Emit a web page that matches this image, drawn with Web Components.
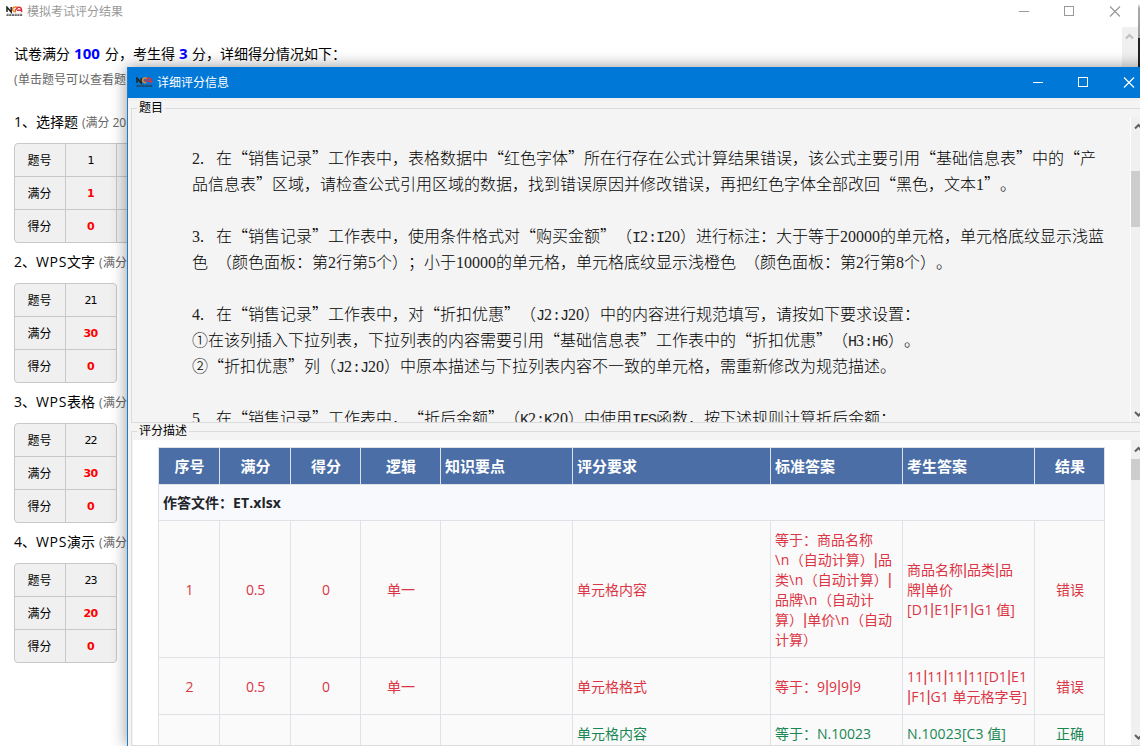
<!DOCTYPE html>
<html lang="zh-CN">
<head>
<meta charset="utf-8">
<title>模拟考试评分结果</title>
<style>
html,body{margin:0;height:100%;overflow:hidden;background:#fff}
body{font:14px/20px "Open Sans","Noto Sans CJK SC",sans-serif;color:#000}
</style>
</head>
<body>
<exam-app></exam-app>
<script>
// One line of mixed text; Latin runs are tracked so that the line is `w` pixels wide.
// Vertical bars use a narrow glyph and keep their own width.
customElements.define('fit-text', class extends HTMLElement {
  connectedCallback() {
    if (this.shadowRoot) return;
    const text = this.textContent, w = +this.getAttribute('w');
    const root = this.attachShadow({mode: 'open'});
    root.innerHTML = `<style>
      :host{display:inline-block;white-space:pre;text-spacing-trim:space-all;flex:none;text-align:left}
      .v{font-family:"Liberation Sans",sans-serif;font-size:16px;line-height:1}
    </style>`;
    const box = document.createElement('span');
    let count = 0;
    for (const part of text.match(/\||[\x20-\x7b\x7d\x7e]+|[^\x20-\x7e]+/g) || []) {
      const s = document.createElement('span');
      s.textContent = part;
      if (part === '|') s.className = 'v';
      else if (/^[\x20-\x7e]/.test(part)) { s.className = 'l'; count += part.length; }
      box.append(s);
    }
    root.append(box);
    if (w) {
      this.style.width = w + 'px';
      const gap = w - box.getBoundingClientRect().width;
      if (count) box.querySelectorAll('.l').forEach(s => s.style.letterSpacing = gap / count + 'px');
      else box.style.letterSpacing = gap / text.length + 'px';
    }
  }
});

// Question text on a 16px grid: full-width glyphs take 16px, half-width ones 8px.
customElements.define('grid-line', class extends HTMLElement {
  connectedCallback() {
    const root = this.attachShadow({mode: 'open'});
    root.innerHTML = `<style>
      :host{display:block;height:26px;font:300 16px/26px "Noto Sans CJK SC",sans-serif;white-space:pre;text-spacing-trim:space-all}
      span{line-height:1}
      .d{font-family:"Liberation Serif",serif;font-weight:400;color:#222}
      .p{font-family:"Liberation Serif",serif;font-weight:400;letter-spacing:4px}
      .m{font-family:"Liberation Mono",monospace;font-weight:400;font-size:15px;letter-spacing:-1.002px;color:#222}
    </style>`;
    for (const part of this.textContent.match(/[0-9]+|[. ]+|[\x21-\x2d\x2f\x3a-\x7e]+|[^\x20-\x7e]+/g) || []) {
      const s = document.createElement('span');
      s.textContent = part;
      if (/^[0-9]/.test(part)) s.className = 'd';
      else if (/^[. ]/.test(part)) s.className = 'p';
      else if (/^[\x20-\x7e]/.test(part)) s.className = 'm';
      root.append(s);
    }
  }
});

const logo = `<svg width="17" height="11" viewBox="0 0 17 11">
  <path d="M1 6V1.2L5.2 6V1" fill="none" stroke="#222" stroke-width="1.5"/>
  <path d="M11 1.2C8 .4 6.3 2 6.6 3.6S8.500 6 10.200 5.500" fill="none" stroke="#e58a2b" stroke-width="1.600"/>
  <path d="M9 4.500L12 1.200C15 .8 15.800 2.500 15.600 6.200M11 4.300h4" fill="none" stroke="#e0303a" stroke-width="1.500"/>
  <path d="M.5 8.300h16M.5 9.500h16" stroke="#333" stroke-width="1" stroke-dasharray="2.200 .5" opacity=".75"/></svg>`;

customElements.define('title-bar', class extends HTMLElement {
  connectedCallback() {
    this.attachShadow({mode: 'open'}).innerHTML = `<style>
      :host{display:flex;align-items:center;box-sizing:border-box;font-size:12px;line-height:20px}
      .logo{display:flex;margin-right:4px}
      .ctl{margin-left:auto;display:flex;gap:34px}
      svg{display:block;flex:none}
    </style><span class="logo">${logo}</span><slot></slot>
    <span class="ctl">
      <svg width="11" height="11" fill="none" stroke="currentColor"><path d="M0 5.500h10"/></svg>
      <svg width="11" height="11" fill="none" stroke="currentColor"><rect x=".5" y=".5" width="9" height="9"/></svg>
      <svg width="12" height="11" fill="none" stroke="currentColor" stroke-width="1.200"><path d="M1 .5l10 10M11 .5l-10 10"/></svg>
    </span>`;
  }
});

customElements.define('scroll-bar', class extends HTMLElement {
  connectedCallback() {
    const chevron = d => `<svg width="9" height="7"><path d="${d}" fill="none" stroke="currentColor" stroke-width="2"/></svg>`;
    this.attachShadow({mode: 'open'}).innerHTML = `<style>
      :host{display:flex;flex-direction:column;align-items:center;background:#f0f0f0;width:17px;flex:none;color:#606060;box-sizing:border-box;padding:6px 0 4px}
      svg{display:block;flex:none;margin-left:-2px}
      .t{width:17px;background:#cdcdcd;flex:none;margin-top:var(--t,0);height:var(--h,0)}
      .sp{flex:1}
    </style>${chevron('M1 5.500L4.500 2L8 5.500')}<div class="t"></div><div class="sp"></div>${this.hasAttribute('down') ? chevron('M1 1L4.500 4.500L8 1') : ''}`;
  }
});

customElements.define('score-section', class extends HTMLElement {
  connectedCallback() {
    const g = n => this.getAttribute(n), extra = this.hasAttribute('wide');
    const row = (l, v, c = '') => `<div class="c k">${l}</div><div class="c n ${c}"><fit-text w="${v.length * (c ? 7 : 6)}">${v}</fit-text></div>${extra ? '<div class="c"></div>' : ''}`;
    this.attachShadow({mode: 'open'}).innerHTML = `<style>
      :host{display:block;height:140px}
      .h{display:flex;height:31px;line-height:20px;align-items:flex-start;white-space:nowrap}
      .s{font-size:12px;line-height:22px;color:#666;margin-left:4px}
      .g{display:grid;grid-template-columns:50px 50px ${extra ? '50px' : ''};grid-auto-rows:32px;gap:1px;background:#c8c8c8;border:1px solid #c8c8c8;border-radius:4px;overflow:hidden;width:max-content}
      .c{background:#f0f0f0;display:flex;align-items:center;justify-content:center;font-size:12px;padding-top:2px;box-sizing:border-box}
      .k{padding-right:1px}
      .n{font:11px/16px "DejaVu Sans",sans-serif;padding-right:1px}
      .r{color:#f00;font-weight:700;font-size:11px}
    </style>
    <div class="h"><fit-text w="22">${g('no')}、</fit-text><fit-text w="${g('w')}">${g('name')}</fit-text><fit-text class="s" w="${g('sw')}">${g('note')}</fit-text></div>
    <div class="g">${row('题号', g('q'))}${row('满分', g('full'), 'r')}${row('得分', '0', 'r')}</div>`;
  }
});

customElements.define('result-window', class extends HTMLElement {
  connectedCallback() {
    this.attachShadow({mode: 'open'}).innerHTML = `<style>
      :host{display:grid;grid-template-columns:1fr 2px;width:1140px;height:746px;background:#fff}
      title-bar{height:27px;padding:0 17px 4px 6px;color:#999}
      .main{display:flex;flex-direction:column}
      .body{flex:1;display:flex}
      .content{flex:1;padding:17px 0 0 14px;min-width:0}
      .sum{display:flex;height:25px;align-items:flex-start}
      b{color:#00f;font-weight:700;font-size:15px;margin-top:-1px}
      .hint{font-size:12px;line-height:22px;color:#666;height:43px}
      scroll-bar{width:16px;color:#bfbfbf}
      .edge{background:linear-gradient(#fff 0 4px,#aaa 8px,#999 38px,#222 38px)}
    </style>
    <div class="main"><title-bar><fit-text w="96">模拟考试评分结果</fit-text></title-bar>
    <div class="body"><div class="content">
      <div class="sum"><fit-text w="56">试卷满分</fit-text><b style="margin-left:4px;margin-right:5px"><fit-text w="26">100</fit-text></b><fit-text w="70">分，考生得</fit-text><b style="margin-left:4px;margin-right:4px"><fit-text w="9">3</fit-text></b><fit-text w="154">分，详细得分情况如下：</fit-text></div>
      <div class="hint"><fit-text w="112">(单击题号可以查看题</fit-text></div>
      <score-section wide no="1" name="选择题" w="42" note="(满分 20" sw="44" q="1" full="1"></score-section>
      <score-section no="2" name="WPS文字" w="59" note="(满分" sw="28" q="21" full="30"></score-section>
      <score-section no="3" name="WPS表格" w="59" note="(满分" sw="28" q="22" full="30"></score-section>
      <score-section no="4" name="WPS演示" w="59" note="(满分" sw="28" q="23" full="20"></score-section>
    </div><scroll-bar></scroll-bar></div></div><div class="edge"></div>`;
  }
});

customElements.define('group-box', class extends HTMLElement {
  connectedCallback() {
    this.attachShadow({mode: 'open'}).innerHTML = `<style>
      :host{display:grid;grid-template-rows:9px 1fr;width:1025px;box-sizing:border-box}
      .top{display:flex;align-items:center;height:18px;font-size:12px;line-height:18px;white-space:nowrap;z-index:1}
      .top i{width:6px;height:1px;background:#dcdcdc}.top u{flex:1;height:1px;background:#dcdcdc}
      .top span{padding:0 2px}
      .b{border-left:1px solid #dcdcdc;border-bottom:1px solid #dcdcdc;display:flex;overflow:hidden;min-height:0;padding:9px 0 0 1px}
    </style><div class="top"><i></i><span>${this.getAttribute('label')}</span><u></u></div><div class="b"><slot></slot></div>`;
  }
});

customElements.define('score-table', class extends HTMLElement {
  connectedCallback() {
    const cell = (c, lines) => `<div class="${c}">${lines.map(([t, w]) => `<fit-text w="${w}">${t}</fit-text>`).join('')}</div>`;
    const head = [['序号',30],['满分',30],['得分',30],['逻辑',30],['知识要点',60],['评分要求',60],['标准答案',60],['考生答案',60],['结果',30]]
      .map((h, i) => cell('h' + (i < 4 || i > 7 ? ' m' : ''), [h])).join('');
    const row = (c, n, full, got, logic, req, std, ans, res) =>
      cell(c + ' m', n) + cell(c + ' m', full) + cell(c + ' m', got) + cell(c + ' m', logic) + cell(c, []) + cell(c, req) + cell(c, std) + cell(c, ans) + cell(c + ' m', res);
    this.attachShadow({mode: 'open'}).innerHTML = `<style>
      :host{display:grid;grid-template-columns:60px 70px 69px 79px 131px 197px 131px 131px 69px;grid-template-rows:36px 35px 136px 56px 38px;gap:1px;background:#dee2e6;padding:1px;width:max-content;height:max-content}
      div{background:#fafafa;display:flex;flex-direction:column;justify-content:center;align-items:flex-start;padding-left:4px;line-height:20px;min-width:0;box-sizing:border-box}
      fit-text{height:20px}
      .m{align-items:center;padding:0 0 0 1px}
      .h{background:#4a6ea5;color:#fff;font-weight:700;font-size:15px}
      .f{grid-column:1/-1;background:#f8f9fc;color:#212529;font-weight:700}
      .r{color:#dc3545;padding-top:2px}.g{color:#198754}
    </style>${head}${cell('f', [['作答文件：ET.xlsx', 118]])}
    ${row('r', [['1',8]], [['0.5',19]], [['0',8]], [['单一',28]], [['单元格内容',70]],
      [['等于：商品名称',98],['\\n（自动计算）|品',117],['类\\n（自动计算）|',117],['品牌\\n（自动计',99],['算）|单价\\n（自动',117],['计算）',42]],
      [['商品名称|品类|品',106],['牌|单价',46],['[D1|E1|F1|G1 值]',108]], [['错误',28]])}
    ${row('r', [['2',8]], [['0.5',19]], [['0',8]], [['单一',28]], [['单元格格式',70]],
      [['等于：9|9|9|9',86]], [['11|11|11|11[D1|E1',120],['|F1|G1 单元格字号]',120]], [['错误',28]])}
    ${row('g', [], [], [], [], [['单元格内容',70]], [['等于：N.10023',96]], [['N.10023[C3 值]',99]], [['正确',28]])}`;
  }
});

customElements.define('detail-dialog', class extends HTMLElement {
  connectedCallback() {
    this.attachShadow({mode: 'open'}).innerHTML = `<style>
      :host{display:flex;flex-direction:column;box-sizing:border-box;background:#f4f4f4;border-left:1px solid #1a7fd0;box-shadow:0 0 15px rgba(0,0,0,.42)}
      title-bar{height:31px;background:#0078d7;color:#fff;width:1016px;flex:none;padding:0 9px 0 8px}
      .body{border-top:3px solid #f0f0f0;flex:1;padding-left:3px;display:flex;flex-direction:column;min-height:0}
      group-box{flex:none}
      .q{flex:1;padding:27px 0 0 59px;overflow:hidden}
      .a{flex:1;background:#fff;padding:7px 0 0 25px;overflow:hidden}
    </style>
    <title-bar><fit-text w="72">详细评分信息</fit-text></title-bar>
    <div class="body">
      <group-box label="题目" style="height:324px;margin-top:-2px">
        <div class="q">
          <grid-line>2. 在“销售记录”工作表中，表格数据中“红色字体”所在行存在公式计算结果错误，该公式主要引用“基础信息表”中的“产</grid-line>
          <grid-line>品信息表”区域，请检查公式引用区域的数据，找到错误原因并修改错误，再把红色字体全部改回“黑色，文本1”。</grid-line>
          <grid-line></grid-line>
          <grid-line>3. 在“销售记录”工作表中，使用条件格式对“购买金额”（I2:I20）进行标注：大于等于20000的单元格，单元格底纹显示浅蓝</grid-line>
          <grid-line>色 （颜色面板：第2行第5个）；小于10000的单元格，单元格底纹显示浅橙色 （颜色面板：第2行第8个）。</grid-line>
          <grid-line></grid-line>
          <grid-line>4. 在“销售记录”工作表中，对“折扣优惠”（J2:J20）中的内容进行规范填写，请按如下要求设置：</grid-line>
          <grid-line>①在该列插入下拉列表，下拉列表的内容需要引用“基础信息表”工作表中的“折扣优惠”（H3:H6）。</grid-line>
          <grid-line>②“折扣优惠”列（J2:J20）中原本描述与下拉列表内容不一致的单元格，需重新修改为规范描述。</grid-line>
          <grid-line></grid-line>
          <grid-line>5. 在“销售记录”工作表中，“折后金额”（K2:K20）中使用IFS函数，按下述规则计算折后金额：</grid-line>
        </div>
        <scroll-bar down style="border-left:1px solid #fff;width:18px;margin-right:8px;--t:41px;--h:56px"></scroll-bar>
      </group-box>
      <group-box label="评分描述" style="height:324px;margin-top:-1px">
        <div class="a"><score-table></score-table></div>
        <scroll-bar down style="--t:6px;--h:21px;margin-right:8px"></scroll-bar>
      </group-box>
    </div>`;
  }
});

customElements.define('exam-app', class extends HTMLElement {
  connectedCallback() {
    this.attachShadow({mode: 'open'}).innerHTML = `<style>
      :host{display:block;position:relative;width:1140px;height:746px;overflow:hidden}
      detail-dialog{position:absolute;left:127px;top:67px;width:1030px;height:679px}
    </style><result-window></result-window><detail-dialog></detail-dialog>`;
  }
});
</script>
</body>
</html>
